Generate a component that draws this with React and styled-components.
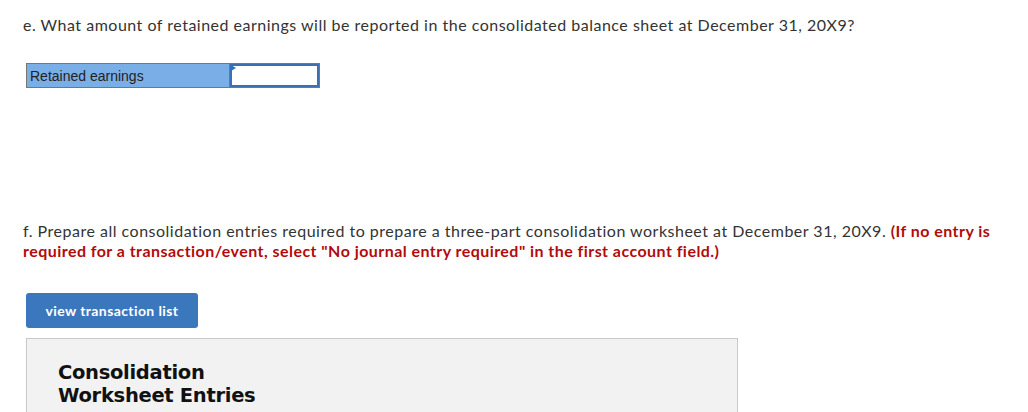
import React from 'react';
import styled, { createGlobalStyle } from 'styled-components';

const GlobalStyle = createGlobalStyle`
  body {
    margin: 0;
    background: #fff;
    font-family: Lato, "Open Sans", sans-serif;
  }
`;

const Page = styled.div`
  padding: 15px 0 0 23px;
  width: 1005px;
  height: 412px;
  overflow: hidden;
  box-sizing: border-box;
`;

const Question = styled.p`
  margin: 0;
  font-size: 16px;
  line-height: 20px;
  letter-spacing: 0.5px;
  color: #333;
`;

const Note = styled.span`
  color: #b20b0b;
  font-weight: 700;
  letter-spacing: 0.45px;
`;

const AnswerTable = styled.div`
  display: flex;
  margin: 28px 0 0 3px;
  width: 294px;
  height: 25px;
  border: 1px solid #777;
  box-sizing: border-box;
`;

const LabelCell = styled.div`
  width: 203px;
  background: #7aaee6;
  border-right: 1px solid #777;
  font-family: "Liberation Sans", Arial, sans-serif;
  font-size: 14px;
  color: #222;
  padding: 4px 3px 0;
  box-sizing: border-box;
`;

const InputCell = styled.div`
  position: relative;
  flex: 1;
  border: 2px solid #3b70b5;
  background: #fff;
`;

const Marker = styled.span`
  position: absolute;
  left: -1px;
  top: -1px;
  width: 0;
  height: 0;
  border-top: 3px solid transparent;
  border-bottom: 3px solid transparent;
  border-left: 5px solid #2f6fc0;
`;

const PartF = styled(Question)`
  margin-top: 133px;
`;

const Button = styled.button`
  display: block;
  margin: 32px 0 0 3px;
  width: 172px;
  height: 35px;
  background: #3b77bc;
  border: none;
  border-radius: 3px;
  color: #fff;
  font-family: Lato, "Open Sans", sans-serif;
  font-weight: 700;
  font-size: 14px;
  letter-spacing: 0.4px;
`;

const Panel = styled.div`
  margin: 10px 0 0 3px;
  width: 712px;
  height: 100px;
  background: #f2f2f2;
  border: 1px solid #c8c8c8;
  box-sizing: border-box;
  padding: 22px 0 0 31px;
`;

const PanelTitle = styled.h2`
  margin: 0;
  font-family: "DejaVu Sans", Verdana, sans-serif;
  font-weight: 700;
  font-size: 19.5px;
  line-height: 23px;
  color: #111;
  letter-spacing: -0.3px;
`;

export default function App() {
  return (
    <>
      <GlobalStyle />
      <Page>
        <Question>
          e. What amount of retained earnings will be reported in the consolidated balance sheet at December 31, 20X9?
        </Question>
        <AnswerTable>
          <LabelCell>Retained earnings</LabelCell>
          <InputCell>
            <Marker />
          </InputCell>
        </AnswerTable>
        <PartF>
          f. Prepare all consolidation entries required to prepare a three-part consolidation worksheet at December 31, 20X9.{' '}
          <Note>
            (If no entry is required for a transaction/event, select "No journal entry required" in the first account field.)
          </Note>
        </PartF>
        <Button>view transaction list</Button>
        <Panel>
          <PanelTitle>
            Consolidation
            <br />
            Worksheet Entries
          </PanelTitle>
        </Panel>
      </Page>
    </>
  );
}
